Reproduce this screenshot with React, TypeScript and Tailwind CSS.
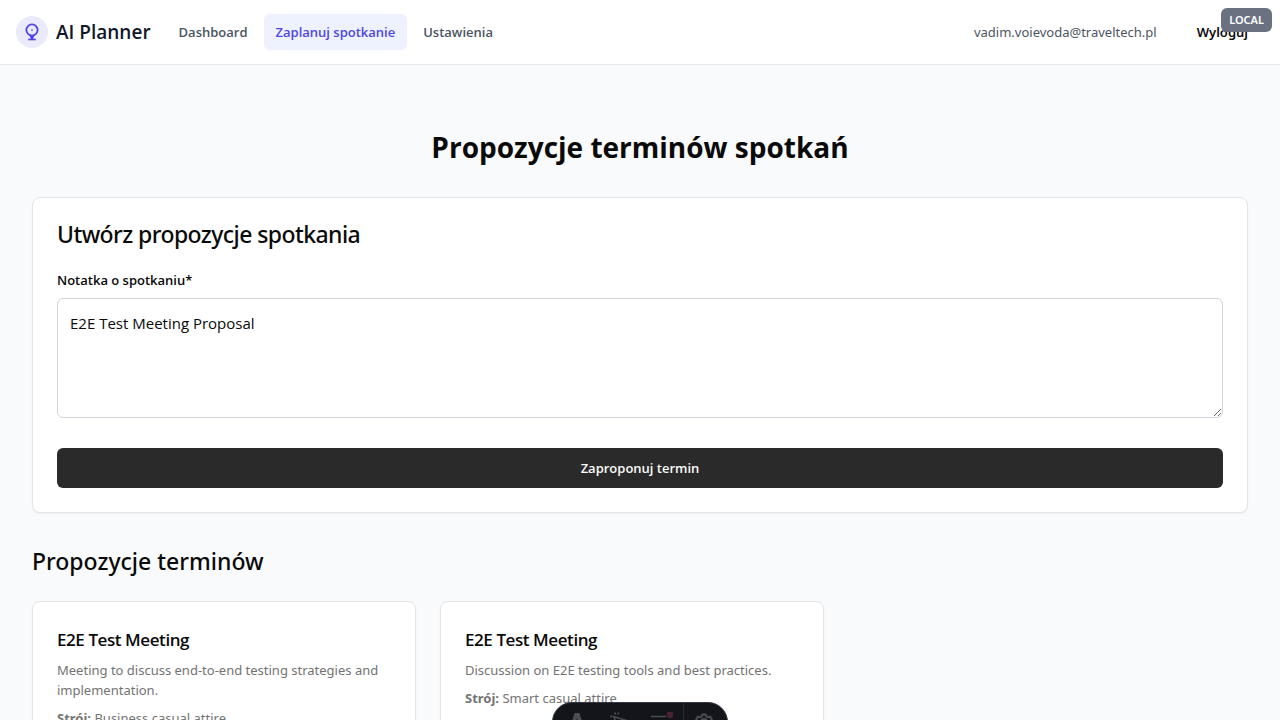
import { useState } from "react";

const navLinks = [
  { label: "Dashboard", active: false },
  { label: "Zaplanuj spotkanie", active: true },
  { label: "Ustawienia", active: false },
];

const proposals = [
  {
    id: 1,
    title: "E2E Test Meeting",
    description: "Meeting to discuss end-to-end testing strategies and implementation.",
    attire: "Business casual attire",
  },
  {
    id: 2,
    title: "E2E Test Meeting",
    description: "Discussion on E2E testing tools and best practices.",
    attire: "Smart casual attire",
  },
];

function Logo() {
  return (
    <a href="#" className="flex items-center gap-2">
      <span className="flex size-8 items-center justify-center rounded-full bg-[#ebeafc]">
        <svg viewBox="0 0 20 20" className="size-5" fill="none" stroke="#4f46e5" strokeWidth="1.8" aria-hidden="true">
          <circle cx="10" cy="8" r="5.6" />
          <path d="M7.6 13.2h4.8l-1.2 3.8H8.800Z" fill="#4f46e5" stroke="none" />
          <path d="M6.2 17.500h7.600" strokeWidth="1.6" />
          <path d="M9 8h2" strokeWidth="1.2" />
        </svg>
      </span>
      <span className="text-[19px] leading-7 font-semibold text-gray-900">AI Planner</span>
    </a>
  );
}

function Header() {
  return (
    <header className="border-b border-gray-200 bg-white">
      <div className="flex h-16 items-center justify-between px-4">
        <div className="flex items-center gap-4">
          <Logo />
          <nav className="flex gap-1">
            {navLinks.map((link) => (
              <a
                key={link.label}
                href="#"
                className={
                  link.active
                    ? "rounded-md bg-[#eef2ff] px-3 py-2 text-[13px] leading-5 font-semibold text-[#4f46e5]"
                    : "rounded-md px-3 py-2 text-[13px] leading-5 font-semibold text-[#4b5563]"
                }
              >
                {link.label}
              </a>
            ))}
          </nav>
        </div>
        <div className="flex items-center gap-6">
          <span className="font-['Noto_Sans','Open_Sans',sans-serif] text-[13px] leading-5 text-[#4b5563]">
            vadim.voievoda@traveltech.pl
          </span>
          <button
            type="button"
            className="rounded-md px-4 py-2 font-['Noto_Sans','Open_Sans',sans-serif] text-[13px] leading-5 font-semibold text-neutral-950"
          >
            Wyloguj
          </button>
        </div>
      </div>
    </header>
  );
}

function ProposalForm() {
  const [note, setNote] = useState("E2E Test Meeting Proposal");
  return (
    <form
      className="flex flex-col rounded-lg border border-neutral-200 bg-white p-6 shadow-xs"
      onSubmit={(event) => event.preventDefault()}
    >
      <h2 className="mb-6 font-['Noto_Sans','Open_Sans',sans-serif] text-[23px] leading-6 font-medium tracking-tight text-neutral-950">
        Utwórz propozycje spotkania
      </h2>
      <label htmlFor="note" className="mb-2 text-[13px] leading-5 font-semibold text-neutral-950">
        Notatka o spotkaniu*
      </label>
      <textarea
        id="note"
        value={note}
        onChange={(event) => setNote(event.target.value)}
        className="h-30 w-full resize-y rounded-md border border-gray-300 bg-white p-3 text-[15px] leading-6 text-neutral-950"
      />
      <button
        type="submit"
        className="mt-[30px] h-10 rounded-md bg-[#2a2a2a] text-[13px] leading-5 font-semibold text-neutral-50"
      >
        Zaproponuj termin
      </button>
    </form>
  );
}

function Toolbar() {
  return (
    <div className="fixed inset-x-0 -bottom-[22px] flex justify-center">
      <div className="flex h-10 w-44 overflow-hidden rounded-full border border-[#343841] bg-[#13151a] text-[#4b4d52]">
        <button type="button" aria-label="Menu" className="flex w-12 items-center justify-center">
          <svg viewBox="0 0 20 20" className="size-5" fill="currentColor" aria-hidden="true">
            <path d="M7.600 1h4.800l5 15.200a18 18 0 0 0-5-1.500L10 6 7.600 14.700a18 18 0 0 0-5 1.500Z" />
          </svg>
        </button>
        <button type="button" aria-label="Inspect" className="flex w-9 items-center justify-center">
          <svg viewBox="0 0 20 20" className="size-5" fill="none" stroke="currentColor" strokeWidth="1.5" aria-hidden="true">
            <path d="m4.500 4.500 13 4-5.500 2-2 5.500ZM5.500.500l1.300 2M9.500.500 9 2.500M1 4.200l2 .500" />
          </svg>
        </button>
        <button type="button" aria-label="Audit" className="flex w-[46px] items-center justify-center">
          <svg viewBox="0 0 26 20" className="h-5 w-[26px]" fill="none" stroke="currentColor" strokeWidth="1.5" aria-hidden="true">
            <path d="M4 4.500h15M4 9.500h15M4 14.500h10" />
            <circle cx="23" cy="2.800" r="3.400" fill="#4b2133" stroke="none" />
          </svg>
        </button>
        <span className="w-px bg-[#2a2c32]" />
        <button type="button" aria-label="Settings" className="flex w-10 items-center justify-center">
          <svg viewBox="0 0 20 20" className="size-5" fill="none" stroke="currentColor" strokeWidth="1.8" aria-hidden="true">
            <path d="M8.300 2.500h3.400l.600 1.800 1.500.900 2.300-.700 1.700 2.900-1.700 1.700v1.800l1.700 1.700-1.700 2.900-2.300-.700-1.500.900-.600 1.800H8.300l-.600-1.800-1.500-.900-2.300.700-1.700-2.900 1.700-1.700V9.100L2.200 7.400 3.900 4.500l2.300.700 1.500-.900Z" />
            <circle cx="10" cy="10" r="3" />
          </svg>
        </button>
      </div>
    </div>
  );
}

export default function App() {
  return (
    <div className="min-h-screen bg-gray-50 font-['Open_Sans','Noto_Sans',sans-serif]">
      <Header />
      <main className="px-8 py-16">
        <h1 className="mb-8 text-center text-[28px] leading-9 font-bold text-neutral-950">
          Propozycje terminów spotkań
        </h1>
        <ProposalForm />
        <section className="mt-8">
          <h2 className="mb-6 font-['Noto_Sans','Open_Sans',sans-serif] text-[23px] leading-8 font-medium text-neutral-950">
            Propozycje terminów
          </h2>
          <div className="flex flex-wrap gap-6">
            {proposals.map((proposal) => (
              <article
                key={proposal.id}
                className="w-full max-w-sm rounded-lg border border-neutral-200 bg-white p-6 font-['Noto_Sans','Open_Sans',sans-serif] text-[13px] leading-5 text-neutral-500 shadow-xs"
              >
                <h3 className="mb-1.5 font-['Open_Sans','Noto_Sans',sans-serif] text-[17px] leading-7 font-semibold tracking-tight text-neutral-950">
                  {proposal.title}
                </h3>
                <p className="mb-2">{proposal.description}</p>
                <p>
                  <strong className="font-bold">Strój:</strong> {proposal.attire}
                </p>
              </article>
            ))}
          </div>
        </section>
      </main>
      <div className="fixed top-2 right-2 rounded-md bg-gray-500 px-2 py-1 font-['Noto_Sans','Open_Sans',sans-serif] text-[11px] leading-4 font-semibold text-white">
        LOCAL
      </div>
      <Toolbar />
    </div>
  );
}
